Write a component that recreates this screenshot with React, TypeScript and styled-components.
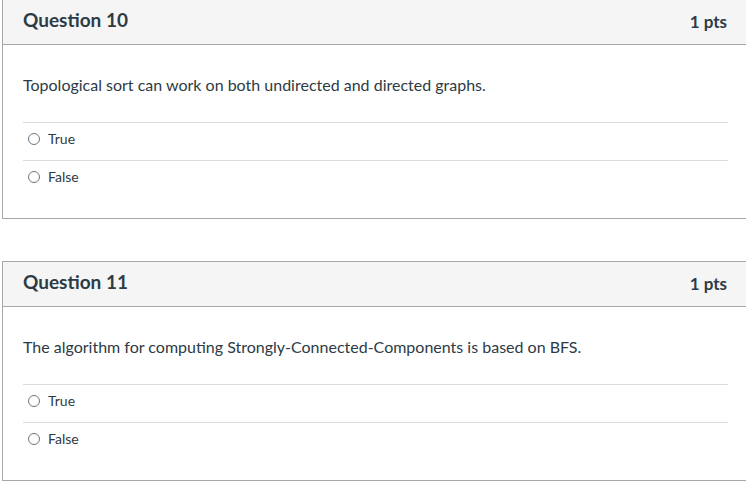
import React from "react";
import styled, { createGlobalStyle } from "styled-components";

const Global = createGlobalStyle`
  html, body { margin: 0; padding: 0; background: #fff; overflow: hidden; }
  body { font-family: Lato, "Open Sans", sans-serif; color: #2d3b45; }
`;

const Page = styled.div`
  display: flex;
  flex-direction: column;
  gap: 42px;
  padding-left: 2px;
  margin-top: -1px;
  width: 747px;
`;

const Card = styled.section`
  border: 1px solid #a8a8a8;
  background: #fff;
  width: 747px;
  box-sizing: border-box;
`;

const Header = styled.header`
  display: flex;
  align-items: center;
  justify-content: space-between;
  height: 44px;
  padding: 0 21px 0 20px;
  background: #f5f5f5;
  border-bottom: 1px solid #a8a8a8;
  box-sizing: content-box;
`;

const Title = styled.h2`
  margin: 0;
  font-size: 19px;
  font-weight: 700;
  color: #2d3b45;
  line-height: 24px;
  margin-top: -4px;
`;

const Points = styled.span`
  font-size: 17px;
  font-weight: 700;
  color: #2d3b45;
  line-height: 24px;
  margin-top: 0;
`;

const Body = styled.div`
  padding: 28px 20px 20px;
`;

const QuestionText = styled.p`
  margin: 0 0 25px;
  font-size: 16px;
  line-height: 24px;
`;

const Answers = styled.div`
  display: flex;
  flex-direction: column;
`;

const Answer = styled.label`
  display: flex;
  align-items: center;
  gap: 8px;
  height: 31px;
  padding: 0 0 6px 5px;
  border-top: 1px solid #dcdcdc;
  font-size: 14px;
  color: #2d3b45;
`;

const Radio = styled.span`
  width: 12px;
  height: 12px;
  border: 1px solid #6b7780;
  border-radius: 50%;
  background: #fff;
  flex: none;
  box-sizing: border-box;
`;

const questions = [
  { n: 10, text: "Topological sort can work on both undirected and directed graphs." },
  { n: 11, text: "The algorithm for computing Strongly-Connected-Components is based on BFS." },
];

export default function App() {
  return (
    <>
      <Global />
      <Page>
        {questions.map((q) => (
          <Card key={q.n}>
            <Header>
              <Title>Question {q.n}</Title>
              <Points>1 pts</Points>
            </Header>
            <Body>
              <QuestionText>{q.text}</QuestionText>
              <Answers>
                {["True", "False"].map((a) => (
                  <Answer key={a}>
                    <Radio />
                    {a}
                  </Answer>
                ))}
              </Answers>
            </Body>
          </Card>
        ))}
      </Page>
    </>
  );
}
